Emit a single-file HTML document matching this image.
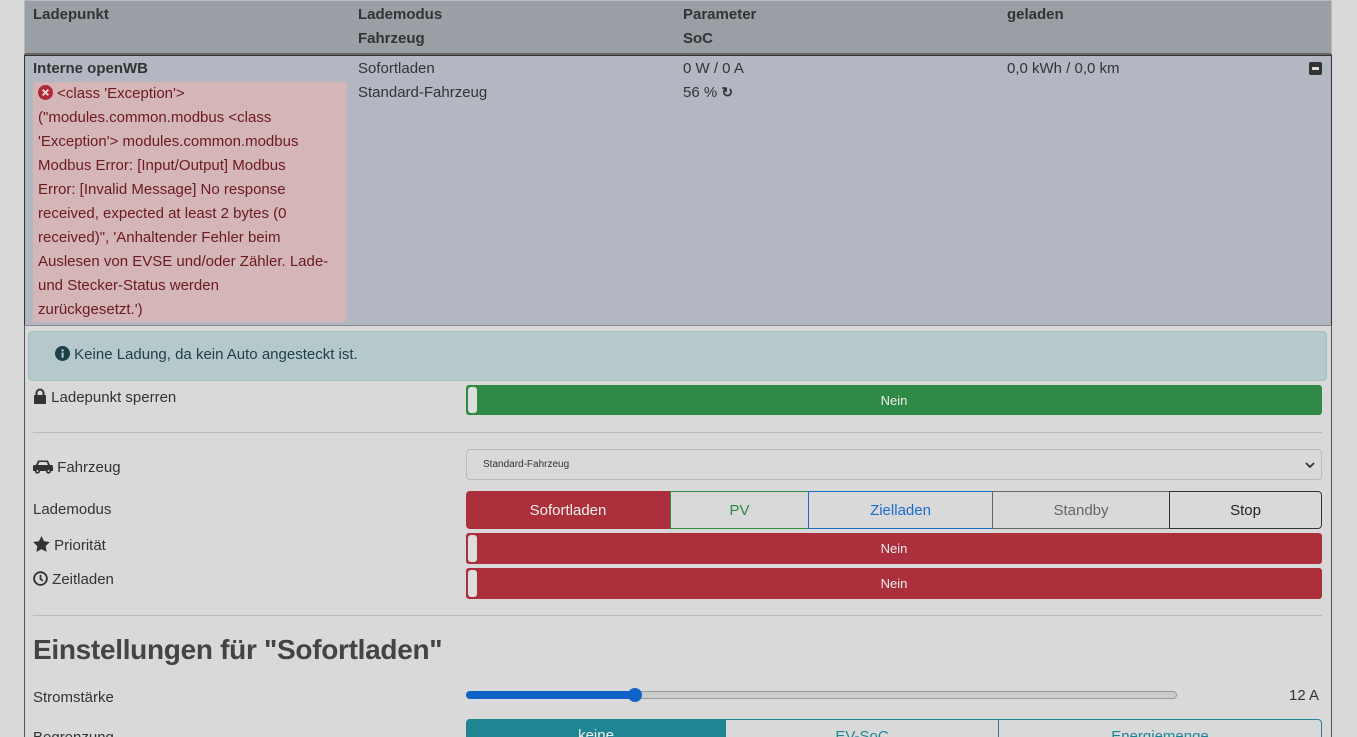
<!DOCTYPE html>
<html style="overflow:hidden"><head><meta charset="utf-8"><style>
*{box-sizing:border-box;margin:0;padding:0}
html,body{width:1357px;height:737px;overflow:hidden}
body{background:#d9d9d9;font-family:"Liberation Sans",sans-serif;font-size:15px;color:#333;position:relative}
.a{position:absolute;white-space:nowrap}
.b{font-weight:bold}
.btn{position:absolute;display:flex;align-items:center;justify-content:center;font-size:15px}
.tog{position:absolute;left:466px;width:856px;border-radius:3px;color:#eee;font-size:13px;display:flex;align-items:center;justify-content:center}
.tog::before{content:"";position:absolute;left:1px;top:1px;bottom:1px;width:9px;background:#ddd;border-radius:3px}
svg{vertical-align:-2px}
</style></head><body>
<div class="a" style="left:24px;top:0;width:1308px;height:737px;border-left:1px solid #555;border-right:1px solid #555"></div>
<div class="a" style="left:24px;top:0;width:1308px;height:55px;background:#9a9ea5;border:1px solid #bbb;border-bottom:2px solid #666"></div>
<div class="a b" style="left:33px;top:6px">Ladepunkt</div>
<div class="a b" style="left:358px;top:6px">Lademodus</div>
<div class="a b" style="left:358px;top:30px">Fahrzeug</div>
<div class="a b" style="left:683px;top:6px">Parameter</div>
<div class="a b" style="left:683px;top:30px">SoC</div>
<div class="a b" style="left:1007px;top:6px">geladen</div>
<div class="a" style="left:24px;top:55px;width:1308px;height:271px;background:#b3b7c1;border:1px solid #333;border-bottom:1px solid #888"></div>
<div class="a b" style="left:33px;top:60px">Interne openWB</div>
<div class="a" style="left:358px;top:60px">Sofortladen</div>
<div class="a" style="left:358px;top:84px">Standard-Fahrzeug</div>
<div class="a" style="left:683px;top:60px">0 W / 0 A</div>
<div class="a" style="left:683px;top:84px">56 % <b style="font-size:14px">&#x21bb;</b></div>
<div class="a" style="left:1007px;top:60px">0,0 kWh / 0,0 km</div>
<div class="a" style="left:1309px;top:62px;width:13px;height:13px;background:#333;border-radius:2px"><div style="position:absolute;left:3px;top:5px;width:7px;height:3px;background:#ddd"></div></div>
<div class="a" style="left:33px;top:82px;width:314px;height:240px;background:#d4b5b8;border-radius:3px;color:#6b1a1f;padding:0 5px;line-height:24px">
<svg width="15" height="15" viewBox="0 0 16 16"><circle cx="8" cy="8" r="8" fill="#b02a37"/><path d="M5 5l6 6M11 5l-6 6" stroke="#f0d0d0" stroke-width="2.2"/></svg> &lt;class 'Exception'&gt;<br>("modules.common.modbus &lt;class<br>'Exception'&gt; modules.common.modbus<br>Modbus Error: [Input/Output] Modbus<br>Error: [Invalid Message] No response<br>received, expected at least 2 bytes (0<br>received)", 'Anhaltender Fehler beim<br>Auslesen von EVSE und/oder Zähler. Lade-<br>und Stecker-Status werden<br>zurückgesetzt.')</div>
<div class="a" style="left:28px;top:331px;width:1299px;height:50px;background:#b5c8cc;border:1px solid #a8bec3;border-radius:4px"></div>
<div class="a" style="left:55px;top:346px;color:#1d3f47"><svg width="15" height="15" viewBox="0 0 16 16"><circle cx="8" cy="8" r="8" fill="#1d3f47"/><rect x="7" y="7" width="2.2" height="5.5" fill="#b5c8cc"/><circle cx="8.1" cy="4.6" r="1.3" fill="#b5c8cc"/></svg> Keine Ladung, da kein Auto angesteckt ist.</div>
<div class="a" style="left:33px;top:388px"><svg width="14" height="16" viewBox="0 0 14 16"><path d="M3.5 7V5a3.5 3.5 0 0 1 7 0v2" fill="none" stroke="#333" stroke-width="2"/><rect x="1" y="7" width="12" height="9" rx="1" fill="#333"/></svg> Ladepunkt sperren</div>
<div class="tog" style="top:385px;height:30px;background:#2e8a45;border:1px solid #2e8a45">Nein</div>
<div class="a" style="left:33px;top:432px;width:1289px;height:1px;background:#bbb"></div>
<div class="a" style="left:33px;top:459px"><svg width="20" height="15" viewBox="0 0 20 15"><path d="M3 6l2-4.5h10L17 6h1.5a1.5 1.5 0 0 1 1.5 1.5V12H0V7.5A1.5 1.5 0 0 1 1.5 6z" fill="#333"/><path d="M5 6l1.3-3h7.4L15 6z" fill="#d9d9d9"/><circle cx="4.5" cy="12" r="2.6" fill="#333"/><circle cx="15.5" cy="12" r="2.6" fill="#333"/><circle cx="4.5" cy="12" r="1" fill="#d9d9d9"/><circle cx="15.5" cy="12" r="1" fill="#d9d9d9"/></svg> Fahrzeug</div>
<div class="a" style="left:466px;top:449px;width:856px;height:31px;border:1px solid #bbb;border-radius:4px;font-size:10px;padding:9px 0 0 16px;color:#333">Standard-Fahrzeug<svg style="position:absolute;right:6px;top:11px" width="10" height="8" viewBox="0 0 10 8"><path d="M1 2l4 4 4-4" fill="none" stroke="#333" stroke-width="1.8"/></svg></div>
<div class="a" style="left:33px;top:501px">Lademodus</div>
<div class="btn" style="left:466px;top:491px;width:204px;height:38px;background:#ab303c;color:#eee;border-radius:4px 0 0 4px">Sofortladen</div>
<div class="btn" style="left:670px;top:491px;width:139px;height:38px;border:1px solid #2e8a45;color:#2e8a45">PV</div>
<div class="btn" style="left:808px;top:491px;width:185px;height:38px;border:1px solid #1a6ccc;color:#1a6ccc">Zielladen</div>
<div class="btn" style="left:992px;top:491px;width:178px;height:38px;border:1px solid #666;color:#666">Standby</div>
<div class="btn" style="left:1169px;top:491px;width:153px;height:38px;border:1px solid #333;color:#222;border-radius:0 4px 4px 0">Stop</div>
<div class="a" style="left:33px;top:536px"><svg width="17" height="16" viewBox="0 0 24 23"><path d="M12 0l3.7 7.5 8.3 1.2-6 5.8 1.4 8.3L12 18.9 4.6 22.8 6 14.5 0 8.7l8.3-1.2z" fill="#333"/></svg> Priorität</div>
<div class="tog" style="top:533px;height:31px;background:#ab303c;border:1px solid #ab303c">Nein</div>
<div class="a" style="left:33px;top:571px"><svg width="15" height="15" viewBox="0 0 16 16"><circle cx="8" cy="8" r="6.8" fill="none" stroke="#333" stroke-width="2"/><path d="M8 4v4.5l2.5 2" fill="none" stroke="#333" stroke-width="1.8"/></svg> Zeitladen</div>
<div class="tog" style="top:568px;height:31px;background:#ab303c;border:1px solid #ab303c">Nein</div>
<div class="a" style="left:33px;top:615px;width:1289px;height:1px;background:#bbb"></div>
<div class="a b" style="left:33px;top:634px;font-size:28px;letter-spacing:-0.3px;color:#444">Einstellungen für "Sofortladen"</div>
<div class="a" style="left:33px;top:689px">Stromstärke</div>
<div class="a" style="left:466px;top:691px;width:711px;height:8px;background:#ccc;border:1px solid #999;border-radius:4px"></div>
<div class="a" style="left:466px;top:691px;width:170px;height:8px;background:#0f62c8;border-radius:4px"></div>
<div class="a" style="left:628px;top:688px;width:14px;height:14px;background:#0f62c8;border-radius:50%"></div>
<div class="a" style="left:1289px;top:687px">12 A</div>
<div class="a" style="left:33px;top:729px">Begrenzung</div>
<div class="btn" style="left:466px;top:719px;width:260px;height:30px;background:#208592;color:#eee;border-radius:4px 0 0 0;align-items:flex-start;padding-top:8px">keine</div>
<div class="btn" style="left:725px;top:719px;width:274px;height:30px;border:1px solid #208592;color:#208592;align-items:flex-start;padding-top:8px">EV-SoC</div>
<div class="btn" style="left:998px;top:719px;width:324px;height:30px;border:1px solid #208592;color:#208592;border-radius:0 4px 0 0;align-items:flex-start;padding-top:8px">Energiemenge</div>
</body></html>
